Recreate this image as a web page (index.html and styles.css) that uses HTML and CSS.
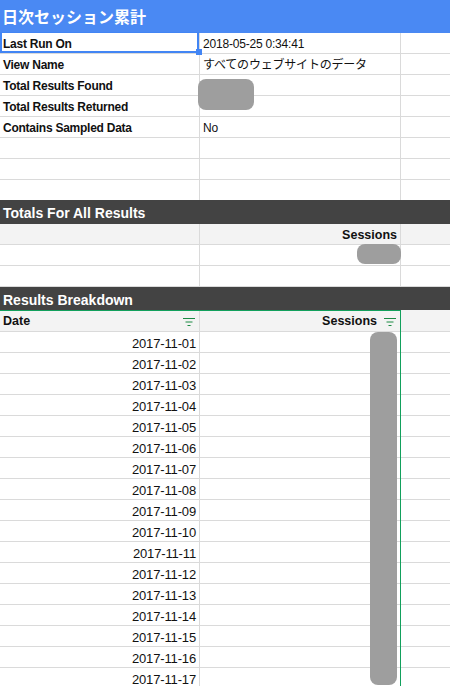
FILE: index.html
```html
<!DOCTYPE html>
<html lang="ja">
<head>
<meta charset="utf-8">
<title>日次セッション累計</title>
<link rel="stylesheet" href="styles.css">
</head>
<body>
<div class="sheet">
  <div class="title">日次セッション累計</div>

  <div class="row"><div class="cell c1 label">Last Run On</div><div class="cell c2 value">2018-05-25 0:34:41</div><div class="cell c3"></div></div>
  <div class="row"><div class="cell c1 label">View Name</div><div class="cell c2 value">すべてのウェブサイトのデータ</div><div class="cell c3"></div></div>
  <div class="row"><div class="cell c1 label">Total Results Found</div><div class="cell c2 value"></div><div class="cell c3"></div></div>
  <div class="row"><div class="cell c1 label">Total Results Returned</div><div class="cell c2 value"></div><div class="cell c3"></div></div>
  <div class="row"><div class="cell c1 label">Contains Sampled Data</div><div class="cell c2 value">No</div><div class="cell c3"></div></div>
  <div class="row"><div class="cell c1"></div><div class="cell c2"></div><div class="cell c3"></div></div>
  <div class="row"><div class="cell c1"></div><div class="cell c2"></div><div class="cell c3"></div></div>
  <div class="row last"><div class="cell c1"></div><div class="cell c2"></div><div class="cell c3"></div></div>

  <div class="band">Totals For All Results</div>
  <div class="row head"><div class="cell c1"></div><div class="cell c2 hright">Sessions</div><div class="cell c3"></div></div>
  <div class="row"><div class="cell c1"></div><div class="cell c2"></div><div class="cell c3"></div></div>
  <div class="row"><div class="cell c1"></div><div class="cell c2"></div><div class="cell c3"></div></div>

  <div class="band band2">Results Breakdown</div>
  <div class="row head head2">
    <div class="cell c1 hsplit"><span>Date</span><svg class="filter" width="12" height="8" viewBox="0 0 12 8"><path d="M0 0.5H12M2.5 4H9.5M4.5 7.5H7.5" stroke="#1a8a43" stroke-width="1" fill="none"/></svg></div>
    <div class="cell c2 hend"><span>Sessions</span><svg class="filter" width="12" height="8" viewBox="0 0 12 8"><path d="M0 0.5H12M2.5 4H9.5M4.5 7.5H7.5" stroke="#1a8a43" stroke-width="1" fill="none"/></svg></div>
    <div class="cell c3"></div>
  </div>
  <div class="row"><div class="cell c1 date">2017-11-01</div><div class="cell c2"></div><div class="cell c3"></div></div>
  <div class="row"><div class="cell c1 date">2017-11-02</div><div class="cell c2"></div><div class="cell c3"></div></div>
  <div class="row"><div class="cell c1 date">2017-11-03</div><div class="cell c2"></div><div class="cell c3"></div></div>
  <div class="row"><div class="cell c1 date">2017-11-04</div><div class="cell c2"></div><div class="cell c3"></div></div>
  <div class="row"><div class="cell c1 date">2017-11-05</div><div class="cell c2"></div><div class="cell c3"></div></div>
  <div class="row"><div class="cell c1 date">2017-11-06</div><div class="cell c2"></div><div class="cell c3"></div></div>
  <div class="row"><div class="cell c1 date">2017-11-07</div><div class="cell c2"></div><div class="cell c3"></div></div>
  <div class="row"><div class="cell c1 date">2017-11-08</div><div class="cell c2"></div><div class="cell c3"></div></div>
  <div class="row"><div class="cell c1 date">2017-11-09</div><div class="cell c2"></div><div class="cell c3"></div></div>
  <div class="row"><div class="cell c1 date">2017-11-10</div><div class="cell c2"></div><div class="cell c3"></div></div>
  <div class="row"><div class="cell c1 date">2017-11-11</div><div class="cell c2"></div><div class="cell c3"></div></div>
  <div class="row"><div class="cell c1 date">2017-11-12</div><div class="cell c2"></div><div class="cell c3"></div></div>
  <div class="row"><div class="cell c1 date">2017-11-13</div><div class="cell c2"></div><div class="cell c3"></div></div>
  <div class="row"><div class="cell c1 date">2017-11-14</div><div class="cell c2"></div><div class="cell c3"></div></div>
  <div class="row"><div class="cell c1 date">2017-11-15</div><div class="cell c2"></div><div class="cell c3"></div></div>
  <div class="row"><div class="cell c1 date">2017-11-16</div><div class="cell c2"></div><div class="cell c3"></div></div>
  <div class="row"><div class="cell c1 date">2017-11-17</div><div class="cell c2"></div><div class="cell c3"></div></div>

  <div class="select-a1"><div class="handle"></div></div>
  <div class="select-green"></div>
  <div class="redact r1"></div>
  <div class="redact r2"></div>
  <div class="redact r3"></div>
</div>
</body>
</html>
```

FILE: styles.css
```css
html, body {
  margin: 0;
  padding: 0;
  overflow: hidden;
  background: #ffffff;
}

.sheet {
  position: relative;
  width: 450px;
  font-family: "Liberation Sans", Arial, "Noto Sans CJK JP", sans-serif;
  color: #000;
}

.title {
  height: 33px;
  line-height: 33px;
  background: #4a89f3;
  color: #fff;
  font-family: "Noto Sans CJK JP", sans-serif;
  font-weight: bold;
  font-size: 16px;
  padding-left: 2px;
  white-space: nowrap;
}

.row {
  display: flex;
  height: 21px;
  box-sizing: border-box;
  border-bottom: 1px solid #dadada;
}

.row.last {
  height: 20px;
  border-bottom: none;
}

.cell {
  box-sizing: border-box;
  border-right: 1px solid #dadada;
  height: 100%;
  white-space: nowrap;
  overflow: visible;
}

.c1 { width: 200px; flex: none; }
.c2 { width: 201px; flex: none; }
.c3 { flex: 1; border-right: none; }

.label {
  font-size: 12px;
  font-weight: bold;
  letter-spacing: -0.25px;
  line-height: 22px;
  padding-left: 3px;
  color: #111;
}

.value {
  font-size: 12px;
  letter-spacing: -0.2px;
  line-height: 22px;
  padding-left: 3px;
  color: #111;
}

.date {
  font-size: 13px;
  letter-spacing: -0.15px;
  line-height: 24px;
  text-align: right;
  padding-right: 3px;
  color: #111;
}

.band {
  height: 24px;
  background: #434343;
  color: #fff;
  font-size: 14px;
  font-weight: bold;
  line-height: 26px;
  padding-left: 3px;
  box-sizing: border-box;
  white-space: nowrap;
}

.band2 {
  height: 23px;
}

.head {
  background: #f3f3f3;
  font-weight: bold;
  font-size: 12.5px;
  color: #111;
}

.head2 {
  height: 22px;
  border-top: 1px solid transparent;
}

.hright {
  text-align: right;
  padding-right: 3px;
  line-height: 23px;
}

.hsplit, .hend {
  display: flex;
  align-items: center;
  padding-left: 3px;
  padding-right: 4px;
  line-height: 22px;
}

.hsplit span { flex: 1; font-size: 12.5px; }
.hend { justify-content: flex-end; gap: 7px; }

.filter {
  display: block;
  flex: none;
  margin-top: 1px;
}

.select-a1 {
  position: absolute;
  left: 0;
  top: 32px;
  width: 199px;
  height: 21px;
  box-sizing: border-box;
  border: 2px solid #4285f4;
  border-top-width: 1px;
}

.handle {
  position: absolute;
  right: -5px;
  bottom: -4px;
  width: 6px;
  height: 6px;
  background: #4285f4;
}

.select-green {
  position: absolute;
  left: 0;
  top: 310px;
  width: 401px;
  height: 400px;
  box-sizing: border-box;
  border-top: 1px solid #12a05c;
  border-right: 1px solid #12a05c;
}

.redact {
  position: absolute;
  background: #9e9e9e;
  border-radius: 8px;
}

.r1 { left: 198px; top: 79px; width: 56px; height: 31px; }
.r2 { left: 357px; top: 244px; width: 44px; height: 20px; }
.r3 { left: 370px; top: 332px; width: 27px; height: 353px; }
```
